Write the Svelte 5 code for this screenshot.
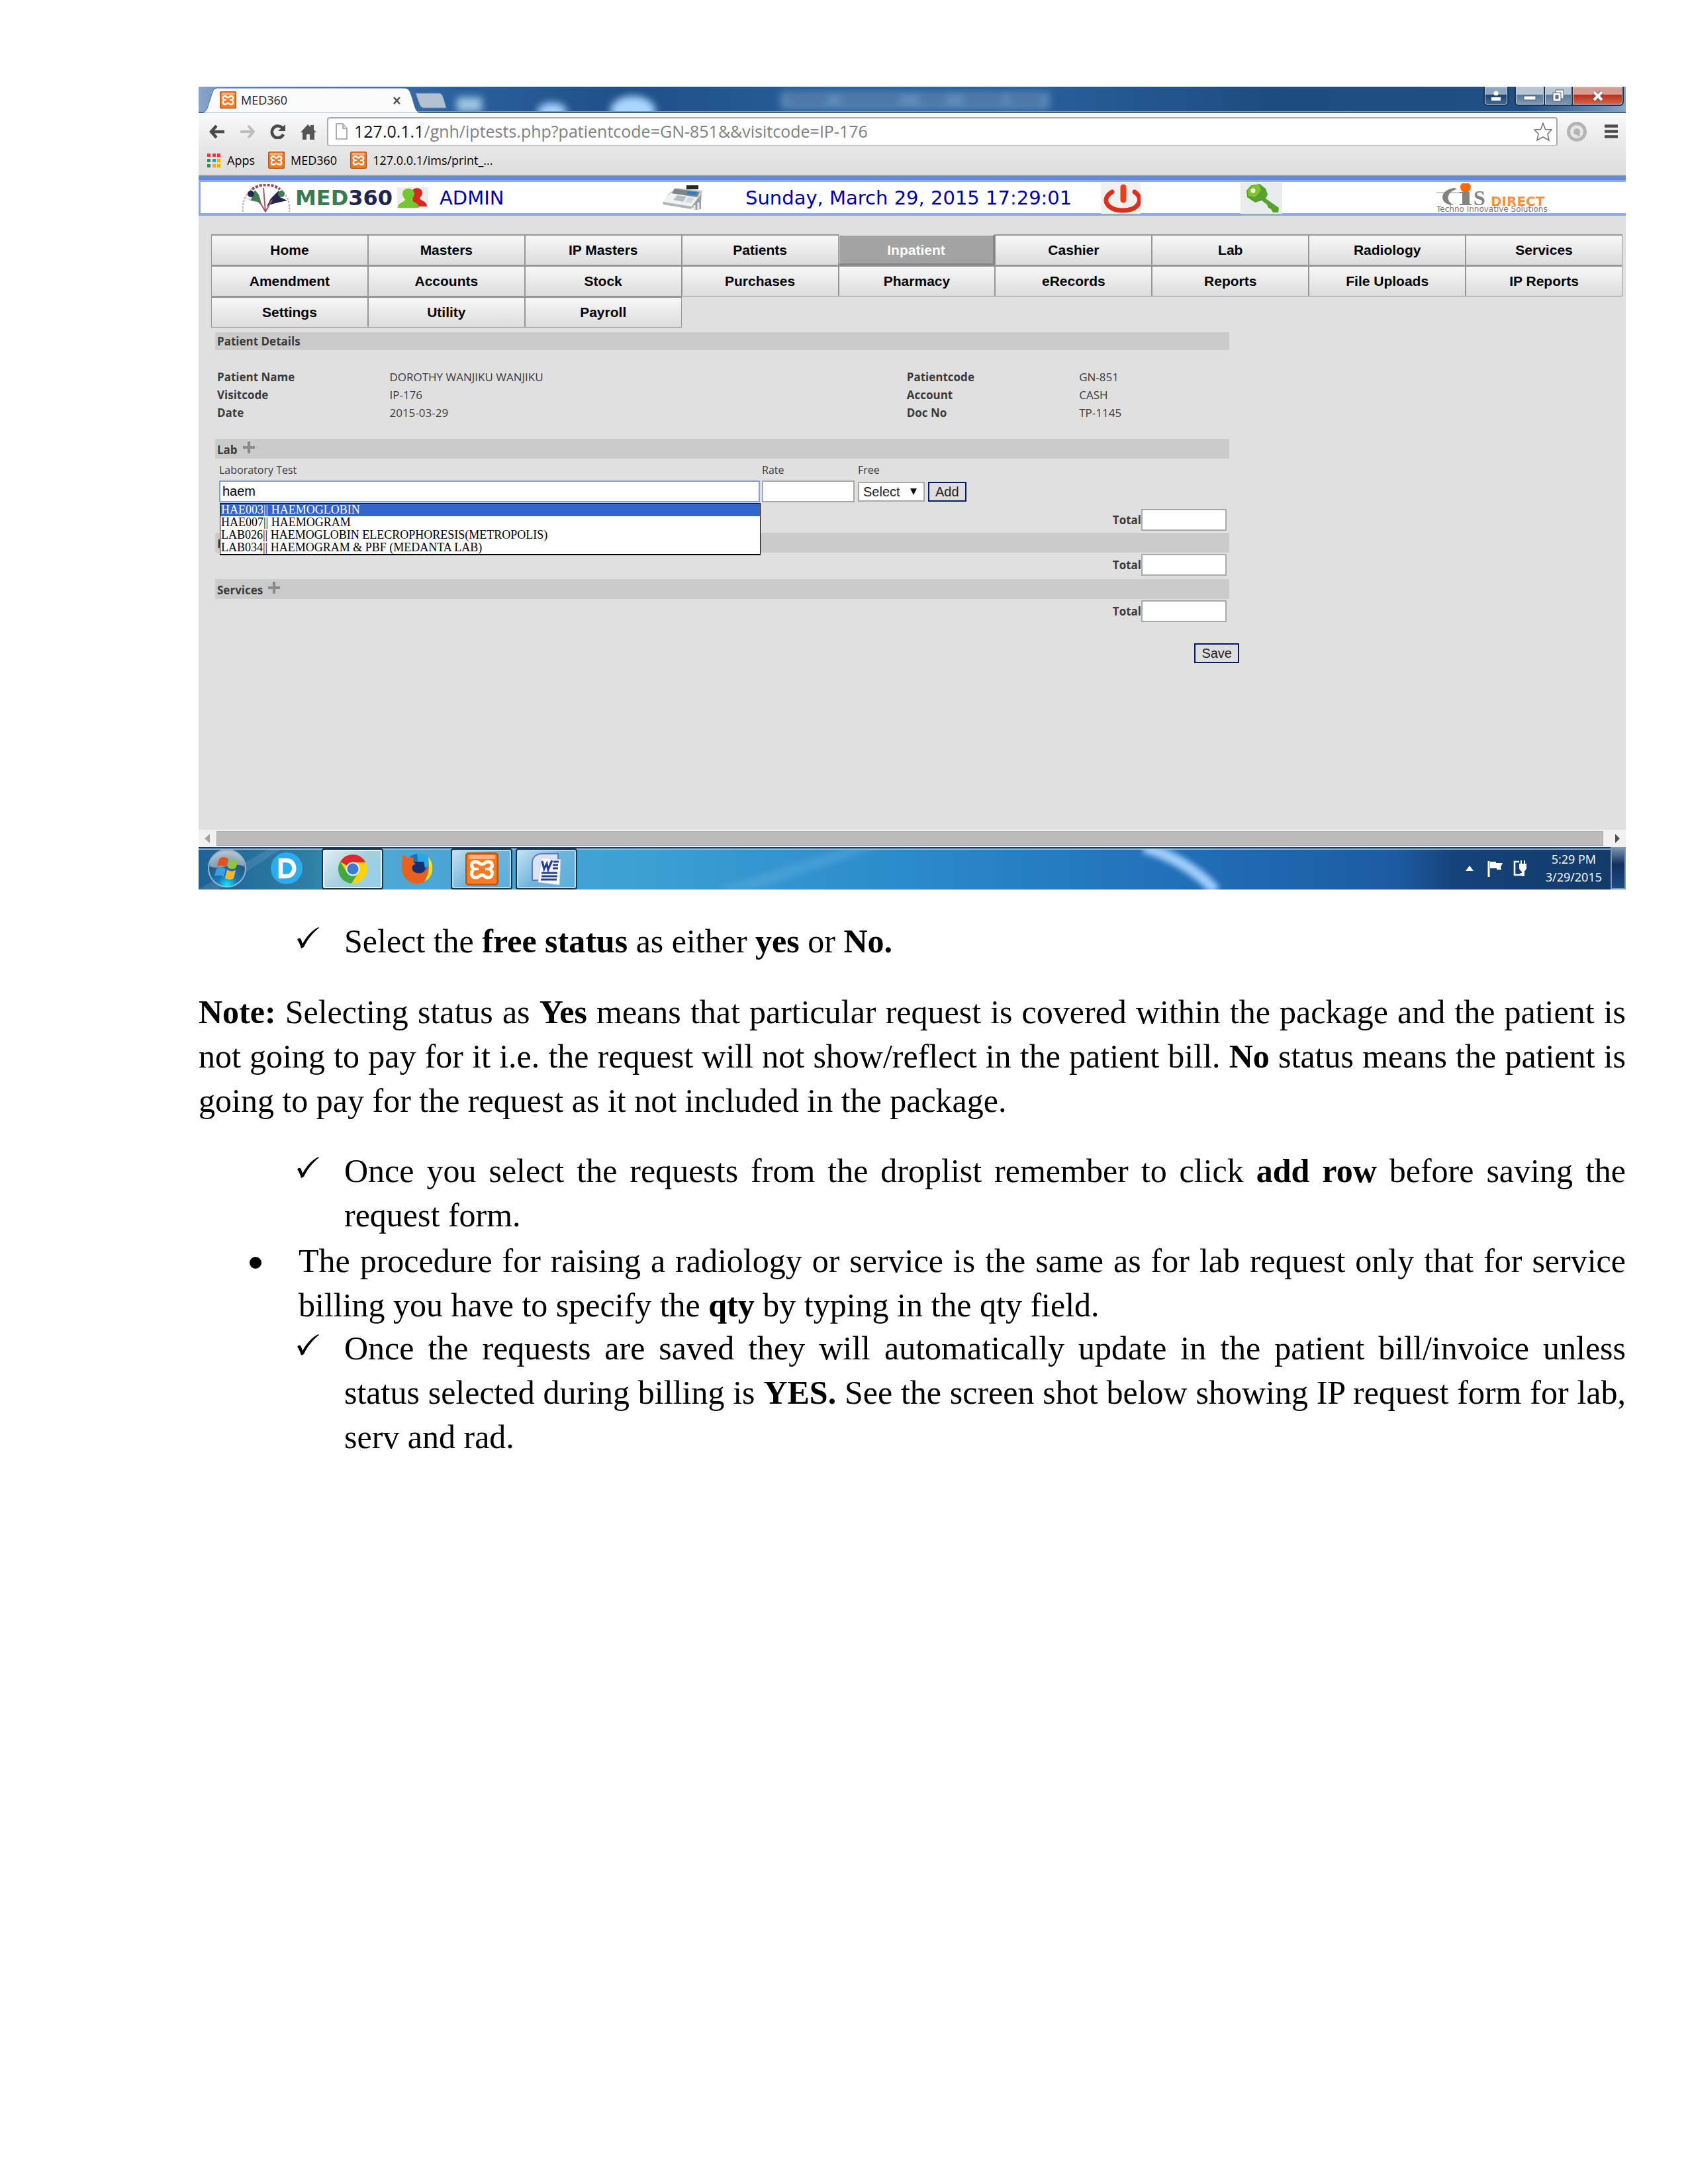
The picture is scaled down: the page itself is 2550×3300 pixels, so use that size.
<script lang="ts">
  const menu = [
    'Home', 'Masters', 'IP Masters', 'Patients', 'Inpatient', 'Cashier', 'Lab', 'Radiology', 'Services',
    'Amendment', 'Accounts', 'Stock', 'Purchases', 'Pharmacy', 'eRecords', 'Reports', 'File Uploads', 'IP Reports',
    'Settings', 'Utility', 'Payroll'
  ];
  const current = 'Inpatient';

  const details = [
    ['Patient Name', 'DOROTHY WANJIKU WANJIKU', 'Patientcode', 'GN-851'],
    ['Visitcode', 'IP-176', 'Account', 'CASH'],
    ['Date', '2015-03-29', 'Doc No', 'TP-1145']
  ];

  const suggestions = [
    'HAE003|| HAEMOGLOBIN',
    'HAE007|| HAEMOGRAM',
    'LAB026|| HAEMOGLOBIN ELECROPHORESIS(METROPOLIS)',
    'LAB034|| HAEMOGRAM & PBF (MEDANTA LAB)'
  ];

  let query = $state('haem');
</script>

{#snippet xampp()}
  <svg class="xampp" viewBox="0 0 50 50" preserveAspectRatio="none" aria-hidden="true">
    <rect x="1" y="1" width="48" height="48" rx="5" fill="#f97a20" stroke="#b4561a" stroke-width="3" />
    <rect x="5" y="4" width="40" height="6" rx="3" fill="#fcb27c" />
    <path d="M16 14C8 14 8 22 13 25C8 29 8 38 16 38C21 38 21 34 25 34S29 38 34 38C42 38 42 29 37 25C42 22 42 14 34 14C29 14 29 18 25 18S21 14 16 14z" fill="none" stroke="#fff" stroke-width="5" />
    <path d="M12 25H20M30 25H38" stroke="#fff" stroke-width="4" />
  </svg>
{/snippet}

{#snippet check()}
  <svg class="tick" viewBox="0 0 34 32" aria-hidden="true">
    <path d="M1 19 c2 -3 5 -3 6 0 l2 6 C15 14 23 5 33 0 l1 1 C24 9 16 19 11 30 l-4 2 C5 26 4 22 1 19 z" />
  </svg>
{/snippet}

{#snippet plus()}
  <svg class="plus" viewBox="0 0 18 18" aria-hidden="true"><path d="M7 0h4v7h7v4h-7v7H7v-7H0V7h7z" /></svg>
{/snippet}

<main>
  <section class="desktop">
    <div class="titlebar">
      <svg class="glass" viewBox="0 0 2156 40" preserveAspectRatio="none" aria-hidden="true">
        <defs>
          <linearGradient id="aero">
            <stop offset="0" stop-color="#8aa4c8" /><stop offset="0.03" stop-color="#5f8ec4" />
            <stop offset="0.18" stop-color="#2a5f9e" /><stop offset="0.3" stop-color="#1f4f88" /><stop offset="0.45" stop-color="#275f9b" />
            <stop offset="0.6" stop-color="#265d99" /><stop offset="0.75" stop-color="#1f4c80" /><stop offset="0.93" stop-color="#214f83" />
            <stop offset="0.98" stop-color="#6288b0" /><stop offset="1" stop-color="#8aa7c6" />
          </linearGradient>
          <filter id="soft" x="-20%" y="-50%" width="140%" height="200%"><feGaussianBlur stdDeviation="6" /></filter>
        </defs>
        <rect width="2156" height="40" fill="url(#aero)" />
        <g filter="url(#soft)">
          <rect x="390" y="16" width="38" height="22" fill="#9cc6e0" />
          <ellipse cx="534" cy="38" rx="22" ry="14" fill="#a9d3ff" />
          <ellipse cx="656" cy="36" rx="34" ry="22" fill="#a9d6ff" />
          <rect x="880" y="8" width="405" height="26" fill="#5f8bba" />
          <path d="M890 20h60M970 20h90M1090 20h40M1155 20h60M1225 20h50" stroke="#47709c" stroke-width="12" />
        </g>
        <rect y="37" width="2156" height="1" fill="#7d9fc4" /><rect y="38" width="2156" height="2" fill="#3d6488" />
      </svg>
      <svg class="tab-shape" viewBox="0 0 378 40" preserveAspectRatio="none" aria-hidden="true">
        <path d="M0 40 C14 40 12 34 18 18 C22 5 22 2 30 2 H310 C318 2 319 6 323 18 C328 35 328 40 340 40 z" fill="#fbfbfb" stroke="#4d6e94" stroke-width="1" />
        <path d="M328 10 H362 C367 10 368 12 370 18 L374 32 H341 C337 32 335 30 333 24 z" fill="#b3c1d3" stroke="#7891b0" />
      </svg>
      <div class="tab">
        {@render xampp()}<span>MED360</span>
        <button class="bare" aria-label="Close tab"><svg width="12" height="12" viewBox="0 0 12 12"><path d="M1 1l9 10M10 1L1 11" stroke="#555" stroke-width="2.6" /></svg></button>
      </div>
      <div class="window-buttons">
        <button class="user" aria-label="Switch person"><svg width="16" height="16" viewBox="0 0 16 16"><circle cx="8" cy="4" r="3.5" fill="#fff" /><path d="M1 15v-5h14v5z" fill="#fff" /></svg></button>
        <button class="min" aria-label="Minimize"><svg width="20" height="8" viewBox="0 0 20 8"><rect x="1" y="1" width="18" height="6" fill="#fff" stroke="#555b70" /></svg></button>
        <button class="max" aria-label="Restore"><svg width="18" height="19" viewBox="0 0 18 19"><path d="M5 1h12v13H5z" fill="#fff" stroke="#555b70" /><path d="M1 5h12v13H1z" fill="#fff" stroke="#555b70" /><path d="M5 9h4v5H5z" fill="#5f7290" stroke="#555b70" /></svg></button>
        <button class="close" aria-label="Close"><svg width="18" height="16" viewBox="0 0 18 16"><path d="M3 2l12 12M15 2L3 14" stroke="#555b70" stroke-width="6" /><path d="M3 2l12 12M15 2L3 14" stroke="#fff" stroke-width="4" /></svg></button>
      </div>
    </div>

    <div class="toolbar">
      <div class="nav-buttons">
        <button class="bare" aria-label="Back"><svg width="24" height="22" viewBox="0 0 24 22"><path d="M11 2L3 11l8 9M3 11h20" fill="none" stroke="#4a4a4a" stroke-width="4.5" /></svg></button>
        <button class="bare" aria-label="Forward"><svg width="24" height="22" viewBox="0 0 24 22"><path d="M13 2l8 9-8 9M21 11H1" fill="none" stroke="#bdbdbd" stroke-width="4" /></svg></button>
        <button class="bare" aria-label="Reload"><svg width="24" height="22" viewBox="0 0 24 22"><path d="M19 6A9 9 0 1 0 20 15" fill="none" stroke="#4a4a4a" stroke-width="4.5" /><path d="M23 0v10H12z" fill="#4a4a4a" /></svg></button>
        <button class="bare" aria-label="Home"><svg width="24" height="24" viewBox="0 0 24 24"><path d="M0 13L11 1l4 4V2h5v7l4 4h-3v11h-7v-8H9v8H3V13z" fill="#555" /></svg></button>
      </div>
      <div class="address">
        <svg width="18" height="25" viewBox="0 0 18 25" aria-hidden="true"><path d="M1 1h10l6 7v16H1z" fill="#fff" stroke="#999" stroke-width="1.6" /><path d="M11 1v7h6" fill="#e2e2e2" stroke="#999" stroke-width="1.6" /></svg>
        <span><b>127.0.1.1</b>/gnh/iptests.php?patientcode=GN-851&amp;&amp;visitcode=IP-176</span>
        <svg class="star" width="28" height="28" viewBox="0 0 28 28" aria-hidden="true"><path d="M14 1l3.500 9.500 9.500 .500-6 6.500 2 9.500-9-5-9 5 2-9.500-6-6.500 9.500-.5z" fill="#fff" stroke="#777" stroke-width="1.600" /></svg>
      </div>
      <svg width="30" height="30" viewBox="0 0 30 30" aria-hidden="true"><circle cx="15" cy="15" r="12.500" fill="#e6e6e6" stroke="#b4b4b4" stroke-width="5" /><circle cx="15" cy="15" r="5" fill="#b4b4b4" /><path d="M18 14v8" stroke="#b4b4b4" stroke-width="3" /></svg>
      <button class="bare" aria-label="Menu"><svg width="20" height="21" viewBox="0 0 20 21"><path d="M0 2.500h20M0 10.500h20M0 18.500h20" stroke="#4c4c4c" stroke-width="4.500" /></svg></button>
    </div>

    <nav class="bookmarks" aria-label="Bookmarks">
      <a href="#apps">
        <svg width="20" height="21" viewBox="0 0 20 21" aria-hidden="true">
          <path d="M0 0h5v5H0zM8 0h5v5H8zM15 0h5v5h-5z" fill="#f5323a" /><path d="M0 8h5v5H0z" fill="#27955b" /><path d="M8 8h5v5H8z" fill="#2196f3" /><path d="M15 8h5v5h-5zM8 16h5v5H8zM15 16h5v5h-5z" fill="#f6a90d" /><path d="M0 16h5v5H0z" fill="#27955b" />
        </svg><span>Apps</span>
      </a>
      <a href="#med360">{@render xampp()}<span>MED360</span></a>
      <a href="#print">{@render xampp()}<span>127.0.0.1/ims/print_...</span></a>
    </nav>

    <header class="banner">
      <div class="brand">
        <svg width="74" height="43" viewBox="0 0 74 43" aria-hidden="true">
          <path d="M2 42C0 26 8 12 18 6" fill="none" stroke="#c9a3a8" stroke-width="2" stroke-dasharray="3 2" /><path d="M56 6C66 12 74 26 72 42" fill="none" stroke="#c9a3a8" stroke-width="2" stroke-dasharray="3 2" />
          <path d="M16 8C28-1 46-1 58 8" fill="none" stroke="#9c4c55" stroke-width="4" stroke-dasharray="4 2" />
          <path d="M5 19L14 24L20 9L26 16L31 33L24 27L14 25z" fill="#3f7d54" /><circle cx="14" cy="15" r="5" fill="#24264f" />
          <path d="M69 25L55 28L44 31L38 34L44 22L56 10L58 20z" fill="#24264f" /><circle cx="60" cy="15" r="5" fill="#3f7d54" />
          <path d="M33 6L36 42L46 24M36 42L27 26" fill="none" stroke="#a45a62" stroke-width="2" />
        </svg>
        <span class="wordmark"><span>MED</span>360</span>
        <svg width="47" height="32" viewBox="0 0 47 32" aria-hidden="true">
          <rect width="47" height="32" fill="#ececec" />
          <path d="M22 8C22-1 38-1 38 8C38 13 35 14 34 17C37 21 45 21 45 29H24z" fill="#d8291f" />
          <path d="M8 10C8-1 26-1 26 10C26 15 22 17 22 19C24 23 33 23 33 31H1C1 23 10 23 12 19C12 17 8 15 8 10z" fill="#74c72c" />
        </svg>
        <span class="navy">ADMIN</span>
      </div>
      <svg width="64" height="38" viewBox="0 0 64 38" aria-hidden="true">
        <path d="M22 4L62 8L60 26L52 36L2 27L12 12z" fill="#c9ccce" /><path d="M14 12L56 17L46 32L2 25z" fill="#f1f2f2" />
        <path d="M20 5L58 10L54 18L16 12z" fill="#7f8587" /><path d="M24 15L38 17L33 25L18 22z" fill="#b9bec2" /><path d="M40 18L50 19L45 27L36 25z" fill="#d6d8da" />
        <path d="M2 25L46 32L45 36L3 29z" fill="#b3b6b8" />
        <path d="M38 0H56V6H38z" fill="#222a22" /><path d="M40 9L54 10L53 15L38 13z" fill="#2f7fc0" /><path d="M46 32L60 14V36L52 37z" fill="#9a9fa3" /><path d="M50 30V38M56 26V36" stroke="#eee" stroke-width="3" />
      </svg>
      <time class="navy" datetime="2015-03-29T17:29:01">Sunday, March 29, 2015 17:29:01</time>
      <button class="bare" aria-label="Log out"><svg width="60" height="47" viewBox="0 0 60 47"><rect width="60" height="47" fill="#f0f0f0" /><path d="M17 14C0 24 8 42 33 42S66 24 51 14" fill="none" stroke="#d9301f" stroke-width="7" stroke-linecap="round" /><path d="M34 7v19" stroke="#e8401c" stroke-width="9" stroke-linecap="round" /></svg></button>
      <button class="bare" aria-label="Change password"><svg width="63" height="47" viewBox="0 0 63 47"><rect width="63" height="47" fill="#e9ebec" /><path d="M9 12L16 4L29 2L38 9L41 18L38 24L58 38L57 45L49 45L46 40L42 38L40 33L32 27L22 30L10 22z" fill="#57a22c" /><path d="M11 12L17 5L28 3L31 12L22 22L12 20z" fill="#83c52f" /><circle cx="19" cy="12" r="3.500" fill="#f4faf0" /></svg></button>
      <svg width="172" height="45" viewBox="0 0 172 45" role="img" aria-label="CIS Direct, Techno Innovative Solutions">
        <path d="M0 14h50" stroke="#c9c9c9" stroke-width="2" /><path d="M28 7C2 9 4 34 27 33C14 28 14 13 31 9z" fill="#85837f" />
        <circle cx="44" cy="6" r="8" fill="#f96b07" /><path d="M35 13h15v18h3v2H35v-2h4V15h-4z" fill="#85837f" />
        <text class="cis-s" x="56" y="33">S</text><text class="cis-d" x="82" y="34">DIRECT</text><text class="cis-t" x="0" y="43">Techno Innovative Solutions</text>
      </svg>
    </header>

    <div class="app">
      <nav class="menu" aria-label="Main menu">
        {#each menu as item}
          <a href="#{item}" class:active={item === current}>{item}</a>
        {/each}
      </nav>

      <form class="request" onsubmit={(e) => e.preventDefault()}>
        <h2 class="first">Patient Details</h2>
        <table class="details">
          <tbody>
            {#each details as [a, b, c, d]}
              <tr><th>{a}</th><td>{b}</td><th>{c}</th><td>{d}</td></tr>
            {/each}
          </tbody>
        </table>

        <h2>Lab {@render plus()}</h2>
        <div class="entry">
          <label for="test">Laboratory Test</label><label for="rate">Rate</label><label for="free">Free</label><span></span>
          <div class="combo">
            <input id="test" class="focus" type="text" bind:value={query} autocomplete="off" />
            <ul>
              {#each suggestions as s, i}<li class:picked={i === 0}>{s}</li>{/each}
            </ul>
          </div>
          <input id="rate" type="text" />
          <div class="pick"><select id="free"><option>Select</option><option>Yes</option><option>No</option></select></div>
          <button type="button">Add</button>
        </div>
        <div class="total"><label for="t1">Total</label><input id="t1" type="text" /></div>
        <h2 aria-label="Radiology">R</h2>
        <div class="total"><label for="t2">Total</label><input id="t2" type="text" /></div>
        <h2>Services {@render plus()}</h2>
        <div class="total"><label for="t3">Total</label><input id="t3" type="text" /></div>
        <div class="save"><button type="submit">Save</button></div>
      </form>
    </div>

    <div class="scrollbar" aria-hidden="true">
      <svg width="8" height="14" viewBox="0 0 8 14"><path d="M8 0v14L0 7z" fill="#a3a3a3" /></svg>
      <i></i>
      <svg width="7" height="14" viewBox="0 0 7 14"><path d="M0 0v14l7-7z" fill="#505050" /></svg>
    </div>

    <footer class="taskbar">
      <svg class="wall" viewBox="0 0 2156 64" preserveAspectRatio="none" aria-hidden="true">
        <defs>
          <linearGradient id="desk">
            <stop offset="0" stop-color="#1f6194" /><stop offset="0.08" stop-color="#2f80a5" /><stop offset="0.12" stop-color="#4fa8d4" />
            <stop offset="0.3" stop-color="#3ea0d4" /><stop offset="0.5" stop-color="#2b8aca" /><stop offset="0.68" stop-color="#2170b9" />
            <stop offset="0.84" stop-color="#1c5ba2" /><stop offset="0.88" stop-color="#15427a" /><stop offset="1" stop-color="#123a68" />
          </linearGradient>
          <filter id="ray" x="-50%" y="-20%" width="200%" height="140%"><feGaussianBlur stdDeviation="4" /></filter>
        </defs>
        <rect width="2156" height="64" fill="url(#desk)" />
        <path d="M0 64L110 0H130L30 64z" fill="#6fa0c4" opacity="0.3" />
        <path d="M780 64L980 0H1030L840 64z" fill="#7cc0ec" opacity="0.25" filter="url(#ray)" />
        <path d="M1428 0C1470 12 1510 36 1536 66" fill="none" stroke="#9fcdfa" stroke-width="17" filter="url(#ray)" />
        <rect width="2156" height="2" fill="#183a5c" /><rect y="2" width="2156" height="2" fill="#a5cbe6" opacity="0.8" />
      </svg>
      <button class="bare start" aria-label="Start">
        <svg width="60" height="60" viewBox="0 0 60 60">
          <defs><radialGradient id="orb" cx="0.5" cy="0.95" r="0.9"><stop offset="0" stop-color="#19e5fb" /><stop offset="0.3" stop-color="#1579b4" /><stop offset="0.7" stop-color="#27587f" /><stop offset="1" stop-color="#8fa3b6" /></radialGradient></defs>
          <circle cx="30" cy="30" r="28" fill="url(#orb)" stroke="#8fb6cf" stroke-width="2" />
          <path d="M4 27C5-4 55-4 56 27C40 20 20 34 4 27z" fill="#dfe5ea" opacity="0.5" />
          <path d="M18 16C23 12 27 12 32 16L29 28C24 25 20 25 15 28z" fill="#e4521b" /><path d="M34 16C39 19 43 19 47 17L43 30C39 32 35 31 31 29z" fill="#8fc43c" />
          <path d="M14 31C19 28 23 28 28 31L25 43C21 40 16 40 11 42z" fill="#3f9ee0" /><path d="M30 32C35 35 38 35 43 33L40 45C36 48 31 47 27 45z" fill="#fcb62b" />
        </svg>
      </button>
      <button class="bare dapp" aria-label="D"><svg width="48" height="48" viewBox="0 0 48 48"><circle cx="24" cy="24" r="24" fill="#2bacec" /><path d="M15 12h9c15 0 15 24 0 24h-9z" fill="none" stroke="#fff" stroke-width="6.500" /></svg></button>
      <button class="task on" aria-label="Chrome"><svg width="46" height="46" viewBox="0 0 46 46"><circle cx="23" cy="23" r="22" fill="#fdd20a" /><path d="M23 23L4 12A22 22 0 0 1 42.500 13H23z" fill="#dd2a2a" /><path d="M4 12A22 22 0 0 0 21 45L31 29L23 33L14 28z" fill="#42a846" /><circle cx="23" cy="23" r="10.500" fill="#f3f3f3" /><circle cx="23" cy="23" r="8.500" fill="#3c7cd0" /></svg></button>
      <button class="bare fox" aria-label="Firefox"><svg width="48" height="48" viewBox="0 0 48 48"><circle cx="26" cy="22" r="20" fill="#1a6fb5" /><path d="M24 2C34-1 46 8 44 24L26 20z" fill="#2aa6e0" /><path d="M18 14H34L36 24C34 36 20 36 17 28z" fill="#16306f" /><path d="M3 3L9 8C13 7 16 7 20 9C16 13 20 16 22 17L16 21C15 28 22 33 31 31C43 27 43 13 41 7C47 13 50 26 44 36C38 46 25 50 14 45C2 39-2 24 3 3z" fill="#e8601c" /><path d="M41 7C47 13 50 26 44 36C41 41 38 42 35 44C44 30 42 18 41 7z" fill="#fde02c" /></svg></button>
      <button class="task" aria-label="XAMPP">{@render xampp()}</button>
      <button class="task word" aria-label="Word"><svg width="50" height="50" viewBox="0 0 50 50"><path d="M3 42V16C3 7 9 2 18 2H42V42z" fill="#d9e4f6" stroke="#6378b8" stroke-width="2" /><path d="M17 8L46 11L44 49L12 45z" fill="#fff" stroke="#c8cfdf" /><path d="M18 13l3 12 4-8 2 9 6-14" fill="none" stroke="#23409c" stroke-width="3.200" /><path d="M35 14h8M34 19h8M34 24h8M17 31h24M17 36h24M16 41h24" stroke="#23409c" stroke-width="3" /></svg></button>
      <div class="tray">
        <svg class="up" width="14" height="9" viewBox="0 0 14 9" aria-hidden="true"><path d="M7 0l6 8H1z" fill="#fff" /></svg>
        <svg class="flag" width="24" height="25" viewBox="0 0 24 25" aria-hidden="true"><path d="M2 1v24" stroke="#fff" stroke-width="3" /><path d="M4 2h9v2h10l-3 6 1 4h-7v-2H4z" fill="#fff" /></svg>
        <svg class="plug" width="22" height="25" viewBox="0 0 22 25" aria-hidden="true"><path d="M10 2H3v20h10v-3" fill="none" stroke="#fff" stroke-width="2.500" /><path d="M10 5h11v6c0 4-3 4-3 6h-5c0-2-3-2-3-6zM12 0h2v5h-2zM17 0h2v5h-2zM14 16h4v8h-4z" fill="#fff" /></svg>
        <div class="clock"><span>5:29 PM</span><span>3/29/2015</span></div>
        <button class="peek" aria-label="Show desktop"></button>
      </div>
    </footer>
  </section>

  <article>
    <ul class="steps"><li>{@render check()}Select the <b>free status</b> as either <b>yes</b> or <b>No.</b></li></ul>
    <p><b>Note:</b> Selecting status as <b>Yes</b> means that particular request is covered within the package and the patient is not going to pay for it i.e. the request will not show/reflect in the patient bill. <b>No</b> status means the patient is going to pay for the request as it not included in the package.</p>
    <ul class="steps"><li>{@render check()}Once you select the requests from the droplist remember to click <b>add row</b> before saving the request form.</li></ul>
    <ul class="bullets"><li>The procedure for raising a radiology or service is the same as for lab request only that for service billing you have to specify the <b>qty</b> by typing in the qty field.</li></ul>
    <ul class="steps"><li>{@render check()}Once the requests are saved they will automatically update in the patient bill/invoice unless status selected during billing is <b>YES.</b> See the screen shot below showing IP request form for lab, serv and rad.</li></ul>
  </article>
</main>

<style>
  :global(body) { margin: 0; background: #fff; }
  main { padding: 131px 94px 200px 300px; color: #000; }
  main, main :global(*) { box-sizing: border-box; }
  svg { display: block; flex: none; }
  button, input, select { font: inherit; margin: 0; }
  .bare { border: 0; padding: 0; background: none; display: block; }
  a { color: inherit; text-decoration: none; }
  ul { list-style: none; margin: 0; padding: 0; }

  .desktop { background: #e0e0e0; font-family: "Open Sans", "Noto Sans", sans-serif; font-size: 18px; }

  .titlebar { position: relative; height: 40px; display: flex; justify-content: space-between; }
  .glass { position: absolute; inset: 0; width: 100%; height: 40px; }
  .tab-shape { position: absolute; left: 0; top: 0; width: 378px; height: 40px; }
  .tab { position: relative; width: 306px; padding-left: 32px; display: flex; align-items: center; gap: 7px; color: #222; }
  .tab .bare { margin-left: auto; padding-top: 2px; }
  .xampp { width: 25px; height: 26px; }
  .window-buttons { position: relative; display: flex; height: 29px; padding-right: 3px; }
  .window-buttons button { border: 2px solid #1d3350; border-top: 0; padding: 0; display: flex; align-items: center; justify-content: center; background: linear-gradient(#b8c5d3 0 45%, #5b7796 45%, #7d9bbb); box-shadow: inset 0 0 0 1px #c5d3e2; }
  .window-buttons .user { width: 38px; margin-right: 9px; border-radius: 0 0 6px 6px; background: linear-gradient(#8fa6c0 0 45%, #1f426e 45%, #41699a); }
  .window-buttons .min { width: 46px; padding-top: 6px; border-radius: 0 0 0 6px; }
  .window-buttons .max { width: 42px; border-left: 0; }
  .window-buttons .close { width: 77px; border-left: 0; border-radius: 0 0 6px 0; background: linear-gradient(#d99b90 0 45%, #b5301d 45%, #d06a4c); }

  .toolbar { display: flex; align-items: center; height: 55px; padding: 0 12px 0 16px; background: linear-gradient(#fafafa, #e6e6e6); }
  .nav-buttons { display: flex; gap: 22px; width: 178px; }
  .address { flex: 1; height: 44px; display: flex; align-items: center; gap: 10px; padding: 0 6px 0 11px; background: #fff; border: 2px solid #a9a9a9; border-bottom-color: #c6c6c6; border-radius: 4px; font-size: 25px; line-height: 36px; color: #808080; white-space: nowrap; }
  .address span { padding-bottom: 2px; }
  .address b { font-weight: 400; color: #111; }
  .star { margin-left: auto; }
  .address + svg { margin: 0 27px 0 14px; }
  .bookmarks { height: 40px; display: flex; align-items: flex-start; gap: 20px; padding: 3px 13px; background: linear-gradient(#e6e6e6, #dedede); border-bottom: 2px solid #a6a6a6; }
  .bookmarks a { display: flex; align-items: center; gap: 10px; height: 26px; }
  .bookmarks .xampp { margin-right: -1px; }

  .banner { border-top: 6px solid #6488dc; background: #fff; display: grid; grid-template-columns: 633fr 127fr 536fr 211fr 295fr 286fr; align-items: center; height: 60px; padding-left: 65px; box-shadow: inset 0 3px #8faae6, inset 0 -4px #8faae6, inset 3px 0 #8faae6; }
  .brand { display: flex; align-items: center; }
  .wordmark { width: 161px; padding-left: 7px; font: 700 32px/40px "DejaVu Sans", sans-serif; color: #21234d; }
  .wordmark span { color: #3b7a53; }
  .navy { font: 29px/40px "DejaVu Sans", sans-serif; color: #00009c; white-space: nowrap; }
  .brand .navy { padding-left: 17px; }
  .cis-s { font: 700 32px "Liberation Serif", serif; fill: #85837f; }
  .cis-d { font: 700 20px "DejaVu Sans", sans-serif; fill: #f7923f; }
  .cis-t { font: 12px "DejaVu Sans", sans-serif; fill: #777; }

  .app { padding: 28px 5px 0 19px; min-height: 928px; }
  .menu { display: grid; grid-template-columns: repeat(9, 1fr); font: 700 21px/44px "Liberation Sans", Arial, sans-serif; text-align: center; color: #000; }
  .menu a { height: 47px; border: 2px solid #979797; border-left-width: 1px; border-right-width: 1px; border-bottom-width: 1px; background: linear-gradient(#f8f8f8, #dcdcdc); }
  .menu .active { background: #a3a3a3; color: #fff; border-color: #e0e0e0 #868686 #868686 #e0e0e0; border-bottom-width: 3px; border-right-width: 3px; }

  .request { max-width: 1532px; margin: 7px 0 0 6px; color: #3b3b3b; font-size: 16px; }
  h2 { margin: 0; height: 30px; display: flex; align-items: center; gap: 8px; padding: 3px 3px 0; background: #cbcbcb; font: 700 17px/27px "Open Sans", "Noto Sans", sans-serif; }
  h2.first { height: 27px; padding-top: 0; }
  .plus { width: 18px; height: 18px; margin-top: -8px; fill: #8a8a8a; }
  .details { width: 100%; margin: 27px 0 26px; border-collapse: collapse; table-layout: fixed; font-size: 17px; }
  .details th, .details td { height: 27px; padding: 0 3px; text-align: left; line-height: 26px; }
  .details th { width: 17%; font-weight: 700; }
  .details td { width: 51%; }
  .details tr > :nth-child(4) { width: 15%; }

  .entry { display: grid; grid-template-columns: 817px 142px 103px auto; justify-content: start; column-gap: 3px; align-items: center; padding: 6px 0 10px 6px; }
  .entry > label { height: 27px; line-height: 23px; }
  input { display: block; height: 33px; padding: 0 3px; border: 2px solid #a9a9a9; background: #fff; color: #000; border-radius: 0; font: 20px "Liberation Sans", Arial, sans-serif; }
  .entry input { width: 100%; }
  .entry #rate { width: 140px; }
  .focus { border-color: #7fa3e0; outline: 0; }
  .combo { position: relative; }
  .combo ul { position: absolute; z-index: 1; left: 1px; top: 34px; width: 100%; border: 1px solid #000; border-bottom-width: 2px; background: #fff; color: #000; font: 18px/19px "Liberation Serif", serif; }
  .combo li { padding-left: 1px; white-space: nowrap; }
  .combo .picked { background: #3366cc; color: #fff; }
  .pick { position: relative; }
  .pick::after { content: ""; position: absolute; right: 14px; top: 10px; border: 5px solid transparent; border-top: 10px solid #111; border-bottom: 0; }
  select { appearance: none; display: block; width: 101px; height: 30px; padding: 0 6px; border: 2px solid #a9a9a9; border-radius: 0; background: #fff; color: #222; font: 20px "Liberation Sans", Arial, sans-serif; }
  form button { height: 30px; padding: 0 9px; border: 2px solid #001c66; background: #dedede; color: #222; font: 20px/26px "Liberation Sans", Arial, sans-serif; }
  .total { display: flex; justify-content: flex-end; align-items: center; height: 40px; padding: 0 4px 3px 0; font-weight: 700; font-size: 17px; }
  .total input { width: 129px; }
  .entry + .total { height: 36px; }
  .save { display: flex; justify-content: flex-end; margin: 27px -15px 0 0; }

  .scrollbar { display: flex; align-items: center; justify-content: space-between; height: 26px; padding: 0 9px; background: #f1f1f1; }
  .scrollbar i { flex: 1; height: 22px; margin: 0 18px 0 10px; background: #bbb; border: 1px solid #a6a6a6; }

  .taskbar { position: relative; display: flex; height: 64px; padding-left: 13px; align-items: center; }
  .taskbar > :global(*) { position: relative; }
  .taskbar .wall { position: absolute; left: 0; top: 0; width: 100%; height: 64px; }
  .start { width: 96px; }
  .dapp { width: 77px; }
  .fox { width: 75px; }
  .task { width: 93px; height: 62px; margin: 1px 27px 0 0; display: flex; align-items: center; justify-content: center; border: 2px solid #17344c; border-radius: 4px; background: linear-gradient(135deg, #c9e4f2, #6fb4dc 50%, #5aaedb); box-shadow: inset 0 0 0 2px #b5dcf0; padding: 0; }
  .task.on { background: linear-gradient(135deg, #e6f0f3, #a5cfdf 50%, #8fd0ec); box-shadow: inset 0 0 0 2px #e6f4fa; }
  .task .xampp { width: 50px; height: 50px; }
  .fox + .task { margin-right: 5px; }
  .tray { margin-left: auto; align-self: stretch; display: flex; align-items: center; color: #fff; font-size: 18px; line-height: 27px; }
  .up { margin-right: 20px; }
  .flag { margin-right: 14px; }
  .plug { margin-right: 28px; }
  .clock { display: flex; flex-direction: column; align-items: center; margin-right: 13px; }
  .peek { align-self: stretch; width: 23px; padding: 0; border: 2px solid #7d97b5; background: linear-gradient(#7b90aa, #12305c 40%, #1b4a86); }

  article { padding-top: 45px; font: 50px/67px "Liberation Serif", "Times New Roman", serif; text-align: justify; }
  article p { margin: 40px 0 39px; }
  .steps li { position: relative; padding-left: 220px; }
  .tick { position: absolute; left: 148px; top: 12px; width: 34px; height: 32px; }
  .bullets li { position: relative; padding-left: 151px; margin: 2px 0 -2px; }
  .bullets li::before { content: ""; position: absolute; left: 77px; top: 27px; width: 18px; height: 18px; border-radius: 50%; background: #000; }
</style>
